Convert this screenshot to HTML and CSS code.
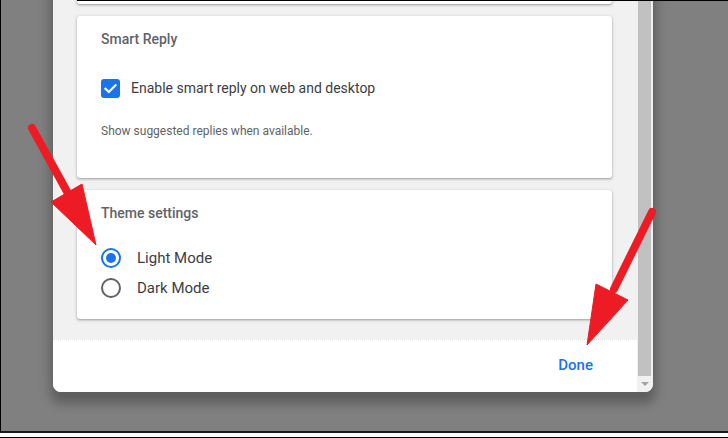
FILE: index.html
```html
<!DOCTYPE html>
<html lang="en">
<head>
<meta charset="utf-8">
<title>Settings</title>
<link rel="stylesheet" href="styles.css">
</head>
<body>
<div class="page">
  <div class="stage">
    <div class="crop-line"></div>
    <div class="dialog">
      <div class="main">
        <div class="scroll">
          <section class="card card-prev"></section>
          <section class="card card-reply">
            <h2 class="card-title">Smart Reply</h2>
            <label class="check-row">
              <span class="checkbox">
                <svg viewBox="0 0 19 19" width="19" height="19"><polyline points="4.5,9.8 7.8,13 14.5,6.2" fill="none" stroke="#fff" stroke-width="2.2" stroke-linecap="square"/></svg>
              </span>
              <span class="label">Enable smart reply on web and desktop</span>
            </label>
            <p class="helper">Show suggested replies when available.</p>
          </section>
          <section class="card card-theme">
            <h2 class="card-title">Theme settings</h2>
            <div class="radio-list">
              <label class="radio-row">
                <span class="radio radio-on"><span class="dot"></span></span>
                <span class="label radio-label">Light Mode</span>
              </label>
              <label class="radio-row">
                <span class="radio"></span>
                <span class="label radio-label">Dark Mode</span>
              </label>
            </div>
          </section>
        </div>
        <div class="footer">
          <button class="done">Done</button>
        </div>
      </div>
      <div class="scrollbar">
        <div class="thumb"></div>
        <div class="sb-button"><span class="sb-arrow"></span></div>
      </div>
    </div>
  </div>
  <div class="bottom-bar"></div>
  <svg class="arrows" width="728" height="438" viewBox="0 0 728 438">
    <g fill="#ed1c24" stroke="#ed1c24">
      <line x1="32" y1="128" x2="70" y2="197" stroke-width="8" stroke-linecap="round"/>
      <polygon points="51,202 82,184 96,245" stroke-width="1" stroke-linejoin="round"/>
      <line x1="652" y1="212" x2="614" y2="289" stroke-width="8" stroke-linecap="round"/>
      <polygon points="596,284 628,300 587,345" stroke-width="1" stroke-linejoin="round"/>
    </g>
  </svg>
</div>
</body>
</html>
```
FILE: styles.css
```css
* { box-sizing: border-box; }
html, body { margin: 0; padding: 0; }
body {
  background: #808080;
  font-family: Roboto, "Liberation Sans", Arial, sans-serif;
  width: 728px;
  height: 438px;
  overflow: hidden;
}
.page {
  position: relative;
  width: 728px;
  height: 438px;
  display: flex;
  flex-direction: column;
}
.stage {
  position: relative;
  height: 431px;
  flex: none;
  background: #808080;
  border-left: 1px solid #000;
  display: flex;
  flex-direction: column;
  justify-content: flex-end;
  padding: 0 0 39px 52px;
  overflow: hidden;
}
.crop-line {
  position: absolute;
  top: 0;
  left: 76px;
  right: 0;
  height: 1px;
  background: #000;
  z-index: 2;
}
.bottom-bar {
  flex: none;
  height: 7px;
  background: #fff;
  border-top: 2px solid #1a1a1a;
  border-bottom: 1px solid #000;
}
.dialog {
  flex: none;
  width: 600px;
  display: flex;
  background: #fff;
  border-radius: 0 0 8px 8px;
  box-shadow: 0 10px 10px 2px rgba(0,0,0,0.2), 0 4px 16px 4px rgba(0,0,0,0.1);
  overflow: hidden;
}
.main {
  width: 584px;
  display: flex;
  flex-direction: column;
}
.scroll {
  background: #f1f1f1;
  padding: 0 25px 20px 24px;
  display: flex;
  flex-direction: column;
  gap: 12px;
}
.card {
  background: #fff;
  border-radius: 3px;
  box-shadow: 0 1px 2px rgba(60,64,67,0.35), 0 1px 3px 1px rgba(60,64,67,0.12);
  padding: 13px 24px 0;
}
.card-prev { height: 80px; }
.card-reply { height: 162px; }
.card-theme { height: 129px; }
.card-title {
  margin: 0;
  font-size: 14px;
  line-height: 20px;
  font-weight: 500;
  color: #5f6368;
}
.check-row {
  display: flex;
  align-items: center;
  height: 20px;
  margin-top: 29px;
}
.checkbox {
  width: 19px;
  height: 19px;
  border-radius: 3px;
  background: #1a73e8;
  display: block;
  flex: none;
  margin-right: 11px;
}
.checkbox svg { display: block; }
.label {
  font-size: 14px;
  line-height: 20px;
  color: #3c4043;
}
.radio-label { font-size: 15px; }
.helper {
  margin: 25px 0 0;
  font-size: 12px;
  line-height: 16px;
  color: #5f6368;
}
.radio-list {
  margin-top: 25px;
  display: flex;
  flex-direction: column;
  gap: 10px;
}
.radio-row {
  display: flex;
  align-items: center;
  height: 20px;
}
.radio {
  width: 20px;
  height: 20px;
  border-radius: 50%;
  border: 2px solid #5f6368;
  margin-right: 16px;
  flex: none;
  display: flex;
  align-items: center;
  justify-content: center;
}
.radio-on { border-color: #1a73e8; }
.dot {
  width: 10px;
  height: 10px;
  border-radius: 50%;
  background: #1a73e8;
}
.footer {
  height: 53px;
  background: #fff;
  border-top: 1px dotted #e2e2e2;
  display: flex;
  align-items: center;
  justify-content: flex-end;
  padding-right: 36px;
}
.done {
  border: 0;
  background: transparent;
  font-family: Roboto, "Liberation Sans", Arial, sans-serif;
  font-size: 15px;
  font-weight: 500;
  color: #1a73e8;
  padding: 0 8px;
  line-height: 36px;
  margin-top: -2px;
}
.scrollbar {
  width: 16px;
  background: #f1f1f1;
  display: flex;
  flex-direction: column;
  padding: 0 2px 0 1px;
}
.thumb {
  flex: 1;
  background: #c1c1c1;
}
.sb-button {
  height: 16px;
  display: flex;
  align-items: center;
  justify-content: center;
}
.sb-arrow {
  width: 0;
  height: 0;
  border-left: 4px solid transparent;
  border-right: 4px solid transparent;
  border-top: 4px solid #a3a3a3;
}
.arrows {
  position: absolute;
  left: 0;
  top: 0;
  pointer-events: none;
}
```
